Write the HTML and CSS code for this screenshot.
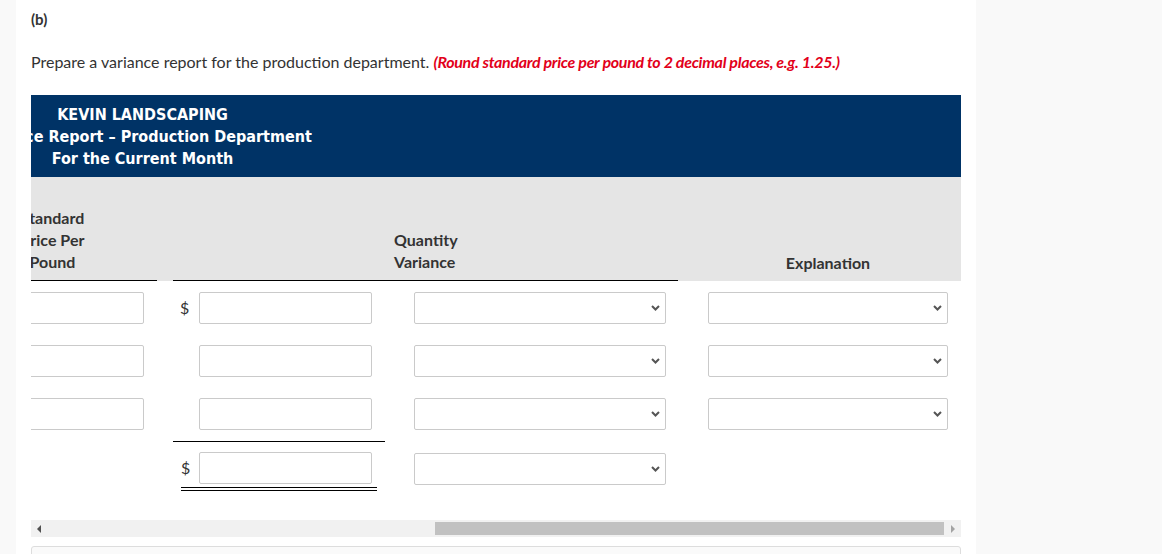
FILE: index.html
```html
<!DOCTYPE html>
<html>
<head>
<meta charset="utf-8">
<title>Variance report</title>
<link rel="stylesheet" href="styles.css">
</head>
<body>
<div class="card">
  <div class="part">(b)</div>
  <p class="prompt">Prepare a variance report for the production department. <span class="hint">(Round standard price per pound to 2 decimal places, e.g. 1.25.)</span></p>

  <div class="scroller">
    <div class="sheet">
      <div class="title">
        <div class="title-text">
          <div>KEVIN LANDSCAPING</div>
          <div>Variance Report – Production Department</div>
          <div>For the Current Month</div>
        </div>
      </div>

      <div class="grid">
        <div class="hd hA"><div class="in ul">Standard<br>Price Per<br>Pound</div></div>
        <div class="hd hB"><div class="in ul"></div></div>
        <div class="hd hC"><div class="in ul">Quantity<br>Variance</div></div>
        <div class="hd hD"><div class="in">Explanation</div></div>

        <div class="c cA"><input class="box" type="text"></div>
        <div class="c cB"><span class="cur">$</span><input class="box" type="text"></div>
        <div class="c cC"><div class="sel"><select class="box"><option></option></select><svg class="chev" width="9" height="6" viewBox="0 0 9 6"><path d="M1 1 L4.5 4.5 L8 1" fill="none" stroke="#555" stroke-width="2"/></svg></div></div>
        <div class="c cD"><div class="sel"><select class="box"><option></option></select><svg class="chev" width="9" height="6" viewBox="0 0 9 6"><path d="M1 1 L4.5 4.5 L8 1" fill="none" stroke="#555" stroke-width="2"/></svg></div></div>

        <div class="c cA"><input class="box" type="text"></div>
        <div class="c cB"><span class="cur"></span><input class="box" type="text"></div>
        <div class="c cC"><div class="sel"><select class="box"><option></option></select><svg class="chev" width="9" height="6" viewBox="0 0 9 6"><path d="M1 1 L4.5 4.5 L8 1" fill="none" stroke="#555" stroke-width="2"/></svg></div></div>
        <div class="c cD"><div class="sel"><select class="box"><option></option></select><svg class="chev" width="9" height="6" viewBox="0 0 9 6"><path d="M1 1 L4.5 4.5 L8 1" fill="none" stroke="#555" stroke-width="2"/></svg></div></div>

        <div class="c cA r3"><input class="box" type="text"></div>
        <div class="c cB r3 sumline"><span class="cur"></span><input class="box" type="text"></div>
        <div class="c cC r3"><div class="sel"><select class="box"><option></option></select><svg class="chev" width="9" height="6" viewBox="0 0 9 6"><path d="M1 1 L4.5 4.5 L8 1" fill="none" stroke="#555" stroke-width="2"/></svg></div></div>
        <div class="c cD r3"><div class="sel"><select class="box"><option></option></select><svg class="chev" width="9" height="6" viewBox="0 0 9 6"><path d="M1 1 L4.5 4.5 L8 1" fill="none" stroke="#555" stroke-width="2"/></svg></div></div>

        <div class="c cA r4"></div>
        <div class="c r4 grandcell"><div class="grand"><span class="cur2">$</span><input class="box" type="text"></div></div>
        <div class="c cC r4c"><div class="sel"><select class="box"><option></option></select><svg class="chev" width="9" height="6" viewBox="0 0 9 6"><path d="M1 1 L4.5 4.5 L8 1" fill="none" stroke="#555" stroke-width="2"/></svg></div></div>
        <div class="c cD r4"></div>
      </div>
    </div>
  </div>

  <div class="hbar">
    <div class="arrow"><svg width="5" height="8" viewBox="0 0 5 8"><path d="M4 0 L0 4 L4 8 Z" fill="#505050"/></svg></div>
    <div class="track"><div class="thumb"></div></div>
    <div class="arrow"><svg width="5" height="8" viewBox="0 0 5 8"><path d="M1 0 L5 4 L1 8 Z" fill="#a3a3a3"/></svg></div>
  </div>

  <div class="nextbox"></div>
</div>
</body>
</html>
```

FILE: styles.css
```css
* { box-sizing: border-box; }
html, body { margin: 0; padding: 0; background: #f9f9f9; }
body {
  font-family: Lato, "Open Sans", sans-serif;
  color: #333;
  width: 1162px;
  height: 554px;
  overflow: hidden;
}
.card {
  margin-left: 16px;
  width: 960px;
  min-height: 554px;
  background: #fff;
  padding: 9px 15px 0;
}
.part { font-weight: 700; font-size: 15px; line-height: 20px; }
.prompt { margin: 22px 0; font-size: 16px; line-height: 22px; }
.hint { color: #e2001a; font-weight: 700; font-style: italic; letter-spacing: -0.3px; }

.scroller { overflow: hidden; width: 930px; }
.sheet { margin-left: -83px; width: 1013px; }

.title {
  background: #003366;
  color: #fff;
  font-family: "DejaVu Sans Condensed", "DejaVu Sans", Verdana, sans-serif;
  font-stretch: condensed;
  font-weight: 700;
  font-size: 16px;
  line-height: 22px;
  padding: 9px 0 7px;
}
.title-text { width: 389px; text-align: center; white-space: nowrap; }

.grid { display: grid; grid-template-columns: 217px 220px 301px 275px; }

.hd {
  background: #e5e5e5;
  height: 104px;
  display: flex;
  font-weight: 700;
  font-size: 16px;
  line-height: 22px;
}
.hd .in {
  flex: 1;
  display: flex;
  flex-direction: column;
  justify-content: flex-end;
  padding-bottom: 7px;
  border-bottom: 1px solid transparent;
}
.hd .in.ul { border-bottom-color: #000; }
.hA { padding-right: 8px; }
.hA .in { text-align: center; }
.hB { padding-left: 8px; }
.hC { padding-right: 8px; }
.hC .in { padding-left: 9px; }
.hD { padding: 0 13px 0 22px; }
.hD .in { text-align: center; padding-bottom: 6px; }

.c { padding-top: 11px; height: 53px; display: flex; align-items: flex-start; }
.c.r3 { height: 55px; }
.c.r4 { padding-top: 10px; }
.c.r4c { padding-top: 11px; }
.cA { padding-left: 40px; padding-right: 21px; }
.cB { padding-left: 15px; padding-right: 13px; }
.cC { padding-left: 29px; padding-right: 20px; }
.cD { padding-left: 22px; padding-right: 13px; }

.sumline {
  background: linear-gradient(#000, #000) 8px 100% / calc(100% - 8px) 1px no-repeat;
}
.grandcell { padding-left: 16px; }
.grand {
  display: flex;
  flex: 0 0 196px;
  width: 196px;
  padding-bottom: 3px;
  border-bottom: 4px double #000;
}
.grand .box { flex: 0 0 173px; }

.cur { flex: 0 0 19px; font-size: 16px; line-height: 32px; }
.cur2 { flex: 0 0 18px; font-size: 16px; line-height: 32px; }

.box {
  display: block;
  height: 32px;
  border: 1px solid #cacaca;
  border-radius: 2px;
  background: #fff;
  flex: 1;
  min-width: 0;
  margin: 0;
  padding: 0 6px;
  font: inherit;
}
.sel { flex: 1; position: relative; display: flex; }
.sel select { appearance: none; -webkit-appearance: none; width: 100%; }
.chev { position: absolute; right: 6px; top: 13px; }

.hbar { display: flex; height: 17px; background: #f1f1f1; margin-top: 25px; }
.arrow { flex: 0 0 17px; display: flex; align-items: center; justify-content: center; }
.track { flex: 1; padding: 2px 0; display: flex; }
.thumb { margin-left: 387px; width: 509px; background: #c1c1c1; }

.nextbox {
  margin-top: 9px;
  height: 40px;
  border: 1px solid #ddd;
  border-radius: 3px;
  background: #fafafa;
}
```
